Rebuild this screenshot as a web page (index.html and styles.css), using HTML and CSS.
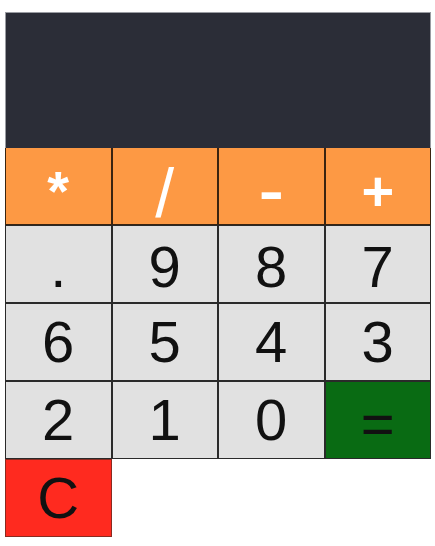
FILE: index.html
```html
<!DOCTYPE html>
<html>
<head>
<meta charset="utf-8">
<link rel="stylesheet" href="styles.css">
</head>
<body>
<div class="calc">
  <div class="display"></div>
  <div class="keys">
    <button class="key op">*</button>
    <button class="key op slash">/</button>
    <button class="key op"><span class="minus">-</span></button>
    <button class="key op">+</button>
    <button class="key num first">.</button>
    <button class="key num first">9</button>
    <button class="key num first">8</button>
    <button class="key num first">7</button>
    <button class="key num">6</button>
    <button class="key num">5</button>
    <button class="key num">4</button>
    <button class="key num">3</button>
    <button class="key num">2</button>
    <button class="key num">1</button>
    <button class="key num">0</button>
    <button class="key eq">=</button>
    <button class="key clear">C</button>
  </div>
</div>
</body>
</html>
```
FILE: styles.css
```css
html, body {
  margin: 0;
  padding: 0;
  background: #ffffff;
}
.calc {
  padding: 12px 0 0 5px;
  width: 426px;
}
.display {
  background: #2b2d37;
  border: 1px solid #9a9ca2;
  border-bottom: none;
  box-sizing: border-box;
  height: 136px;
}
.keys {
  display: grid;
  grid-template-columns: repeat(4, 1fr);
  grid-template-rows: 77px 78px 78px 78px 78px;
}
.key {
  margin: 0;
  padding: 0;
  border: 1px solid #2a2a2a;
  font-family: "Liberation Sans", Arial, sans-serif;
  font-size: 58px;
  line-height: 1;
  color: #111111;
  background: #e1e1e1;
  display: flex;
  align-items: center;
  justify-content: center;
}
.first {
  padding-top: 5px;
}
.op {
  background: #fd9944;
  color: #ffffff;
  font-size: 56px;
  font-weight: bold;
  padding-top: 10px;
  border-top: none;
  border-color: #3a2410;
}
.slash {
  font-size: 68px;
  font-weight: normal;
  padding-top: 14px;
}
.minus {
  display: inline-block;
  transform: scaleX(1.35);
}
.eq {
  background: #096b13;
  padding-top: 8px;
}
.clear {
  background: #ff2a1f;
  border-color: #8a2a20;
}
```
